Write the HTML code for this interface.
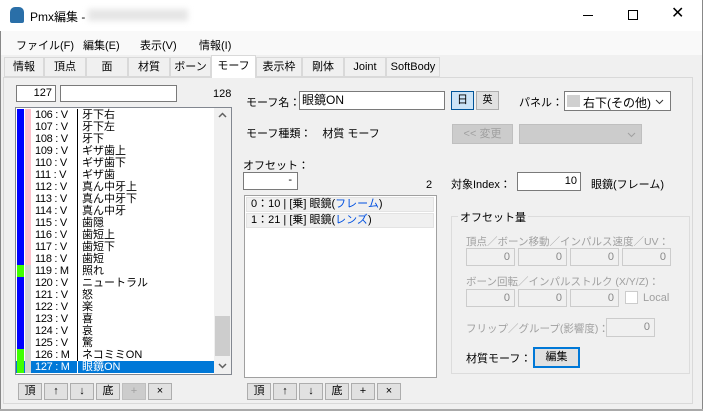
<!DOCTYPE html>
<html><head><meta charset="utf-8"><style>
*{box-sizing:border-box;margin:0;padding:0}
body{width:703px;height:411px;overflow:hidden;background:#f0f0f0;font-family:"Liberation Sans","Noto Sans CJK JP",sans-serif;font-size:11px;color:#000;position:relative}
.a{position:absolute;white-space:nowrap}
.tb{background:#fff;border:1px solid #7a7a7a}
.btn{position:absolute;background:#e1e1e1;border:1px solid #adadad;text-align:center;line-height:15px;font-size:11px}
.dis{color:#a0a0a0}
.dbox{position:absolute;background:#f0f0f0;border:1px solid #ccc;text-align:right;padding-right:4px;color:#888;line-height:16px}
.row{position:absolute;left:16px;width:198px;height:12px;line-height:12px;font-size:11px}
.sw1{position:absolute;left:1px;top:0;width:7px;height:12px}
.sw2{position:absolute;left:9px;top:0;width:6px;height:12px}
.num{position:absolute;left:19px;top:0;letter-spacing:-0.3px}
.sep{position:absolute;left:61px;top:0;width:1px;height:12px;background:#000}
.nm{position:absolute;left:66px;top:0}
.tab{position:absolute;top:57px;height:20px;border:1px solid #d9d9d9;line-height:18px;text-align:center}
</style></head><body>
<div class="a" style="left:0;top:0;width:703px;height:31px;background:#fff"></div>
<div class="a" style="left:10px;top:7px;width:14px;height:16px;background:#2a6fa8;border-radius:5px 5px 2px 2px"></div>
<div class="a" style="left:30px;top:8px;font-size:12px">Pmx編集 -</div>
<div class="a" style="left:88px;top:9px;width:100px;height:12px;background:#e6e6e6;filter:blur(3px)"></div>
<div class="a" style="left:583px;top:15px;width:10px;height:1px;background:#000"></div>
<div class="a" style="left:628px;top:10px;width:10px;height:10px;border:1px solid #000"></div>
<div class="a" style="left:671px;top:4px;font-size:16px;line-height:20px">✕</div>
<div class="a" style="left:1px;top:31px;width:701px;height:24px;background:#f9f9f9"></div>
<div class="a" style="left:16px;top:37px">ファイル(F)</div>
<div class="a" style="left:83px;top:37px">編集(E)</div>
<div class="a" style="left:140px;top:37px">表示(V)</div>
<div class="a" style="left:199px;top:37px">情報(I)</div>
<div class="a" style="left:0;top:55px;width:703px;height:22px;background:#f0f0f0"></div>
<div class="tab" style="left:4px;width:40px">情報</div>
<div class="tab" style="left:44px;width:42px">頂点</div>
<div class="tab" style="left:86px;width:42px">面</div>
<div class="tab" style="left:128px;width:42px">材質</div>
<div class="tab" style="left:170px;width:41px">ボーン</div>
<div class="tab" style="left:256px;width:46px">表示枠</div>
<div class="tab" style="left:302px;width:42px">剛体</div>
<div class="tab" style="left:344px;width:42px">Joint</div>
<div class="tab" style="left:386px;width:54px">SoftBody</div>
<div class="a" style="left:211px;top:55px;width:45px;height:23px;border:1px solid #d9d9d9;border-bottom:none;background:#fff;text-align:center;line-height:20px;z-index:2">モーフ</div>
<div class="a" style="left:3px;top:77px;width:690px;height:327px;border:1px solid #d9d9d9;background:#f0f0f0"></div>
<div class="a" style="left:0;top:31px;width:1px;height:380px;background:#888"></div>
<div class="a" style="left:702px;top:0;width:1px;height:411px;background:#888"></div>
<div class="a" style="left:0;top:409px;width:703px;height:2px;background:#aaa"></div>
<div class="a tb" style="left:16px;top:85px;width:40px;height:17px;text-align:right;padding-right:3px;line-height:15px">127</div>
<div class="a tb" style="left:60px;top:85px;width:117px;height:17px"></div>
<div class="a" style="left:213px;top:88px">128</div>
<div class="a" style="left:15px;top:107px;width:217px;height:268px;background:#fff;border:1px solid #828790"></div>
<div id="rows"></div>
<div class="a" style="left:214px;top:108px;width:17px;height:266px;background:#f0f0f0"></div>
<svg class="a" style="left:218px;top:112px" width="9" height="6"><path d="M1 5L4.5 1.5L8 5" fill="none" stroke="#606060" stroke-width="1.5"/></svg>
<div class="a" style="left:215px;top:316px;width:15px;height:40px;background:#cdcdcd"></div>
<svg class="a" style="left:218px;top:363px" width="9" height="6"><path d="M1 1L4.5 4.5L8 1" fill="none" stroke="#606060" stroke-width="1.5"/></svg>
<div class="btn" style="left:18px;top:383px;width:24px;height:17px">頂</div>
<div class="btn" style="left:44px;top:383px;width:24px;height:17px">↑</div>
<div class="btn" style="left:70px;top:383px;width:24px;height:17px">↓</div>
<div class="btn" style="left:96px;top:383px;width:24px;height:17px">底</div>
<div class="btn" style="left:122px;top:383px;width:24px;height:17px;background:#ccc;border-color:#bfbfbf;color:#a0a0a0">+</div>
<div class="btn" style="left:148px;top:383px;width:24px;height:17px">×</div>
<div class="btn" style="left:247px;top:383px;width:24px;height:17px">頂</div>
<div class="btn" style="left:273px;top:383px;width:24px;height:17px">↑</div>
<div class="btn" style="left:299px;top:383px;width:24px;height:17px">↓</div>
<div class="btn" style="left:325px;top:383px;width:24px;height:17px">底</div>
<div class="btn" style="left:351px;top:383px;width:24px;height:17px">+</div>
<div class="btn" style="left:377px;top:383px;width:24px;height:17px">×</div>
<div class="a" style="left:246px;top:94px">モーフ名：</div>
<div class="a tb" style="left:299px;top:91px;width:146px;height:19px;padding-left:2px;line-height:17px;font-size:12px">眼鏡ON</div>
<div class="btn" style="left:451px;top:91px;width:23px;height:19px;background:#cce4f7;border-color:#005499;line-height:17px">日</div>
<div class="btn" style="left:476px;top:91px;width:23px;height:19px;line-height:17px;font-size:10px">英</div>
<div class="a" style="left:519px;top:94px">パネル：</div>
<div class="a tb" style="left:564px;top:91px;width:107px;height:20px"></div>
<div class="a" style="left:567px;top:95px;width:13px;height:12px;background:#d0d0d0"></div>
<div class="a" style="left:583px;top:94px;font-size:12px">右下(その他)</div>
<svg class="a" style="left:655px;top:99px" width="9" height="6"><path d="M1 1L4.5 4.5L8 1" fill="none" stroke="#333" stroke-width="1"/></svg>
<div class="a" style="left:246px;top:125px">モーフ種類：　材質 モーフ</div>
<div class="btn" style="left:452px;top:124px;width:61px;height:20px;background:#ccc;border-color:#bfbfbf;color:#a0a0a0;line-height:18px">&lt;&lt; 変更</div>
<div class="a" style="left:519px;top:124px;width:123px;height:20px;background:#ccc;border:1px solid #bfbfbf"></div>
<svg class="a" style="left:627px;top:132px" width="9" height="6"><path d="M1 1L4.5 4.5L8 1" fill="none" stroke="#a0a0a0" stroke-width="1"/></svg>
<div class="a" style="left:243px;top:157px">オフセット：</div>
<div class="a tb" style="left:243px;top:172px;width:55px;height:18px;text-align:right;padding-right:5px;line-height:15px">-</div>
<div class="a" style="left:426px;top:179px">2</div>
<div class="a" style="left:244px;top:195px;width:193px;height:183px;background:#fff;border:1px solid #a0a0a0"></div>
<div class="a" style="left:246px;top:197px;width:188px;height:15px;background:#f0f0f0;border:1px solid #e3e3e3;padding-left:4px;line-height:13px">0：10 | [乗] 眼鏡(<span style="color:#0050e0">フレーム</span>)</div>
<div class="a" style="left:246px;top:213px;width:188px;height:15px;background:#f0f0f0;border:1px solid #e3e3e3;padding-left:4px;line-height:13px">1：21 | [乗] 眼鏡(<span style="color:#0050e0">レンズ</span>)</div>
<div class="a" style="left:451px;top:176px">対象Index：</div>
<div class="a tb" style="left:517px;top:172px;width:64px;height:19px;text-align:right;padding-right:3px;line-height:17px">10</div>
<div class="a" style="left:591px;top:176px">眼鏡(フレーム)</div>
<div class="a" style="left:451px;top:216px;width:239px;height:158px;border:1px solid #dcdcdc"></div>
<div class="a" style="left:458px;top:209px;background:#f0f0f0;padding:0 2px">オフセット量</div>
<div class="a dis" style="left:466px;top:234px;font-size:10.5px">頂点／ボーン移動／インパルス速度／UV：</div>
<div class="dbox" style="left:466px;top:248px;width:49px;height:18px">0</div>
<div class="dbox" style="left:518px;top:248px;width:49px;height:18px">0</div>
<div class="dbox" style="left:570px;top:248px;width:49px;height:18px">0</div>
<div class="dbox" style="left:622px;top:248px;width:49px;height:18px">0</div>
<div class="a dis" style="left:466px;top:274px;font-size:10.5px">ボーン回転／インパルストルク (X/Y/Z)：</div>
<div class="dbox" style="left:466px;top:289px;width:49px;height:18px">0</div>
<div class="dbox" style="left:518px;top:289px;width:49px;height:18px">0</div>
<div class="dbox" style="left:570px;top:289px;width:49px;height:18px">0</div>
<div class="a" style="left:625px;top:291px;width:13px;height:13px;border:1px solid #ccc;background:#fff"></div>
<div class="a dis" style="left:643px;top:292px">Local</div>
<div class="a dis" style="left:466px;top:321px;font-size:10.5px">フリップ／グループ(影響度)：</div>
<div class="dbox" style="left:606px;top:318px;width:49px;height:19px">0</div>
<div class="a" style="left:466px;top:350px">材質モーフ：</div>
<div class="btn" style="left:533px;top:347px;width:47px;height:21px;border:2px solid #0078d7;line-height:17px">編集</div>
<script>
var rows=[["106","V","牙下右"],["107","V","牙下左"],["108","V","牙下"],["109","V","ギザ歯上"],["110","V","ギザ歯下"],["111","V","ギザ歯"],["112","V","真ん中牙上"],["113","V","真ん中牙下"],["114","V","真ん中牙"],["115","V","歯隠"],["116","V","歯短上"],["117","V","歯短下"],["118","V","歯短"],["119","M","照れ"],["120","V","ニュートラル"],["121","V","怒"],["122","V","楽"],["123","V","喜"],["124","V","哀"],["125","V","驚"],["126","M","ネコミミON"],["127","M","眼鏡ON"]];
var h="";
rows.forEach(function(r,i){
var sel=i==21;var c1=r[1]=="M"?"#40ff00":"#0000ff";var c2=i<13?"#ffc0cb":"#d3d3d3";
h+='<div class="row" style="top:'+(109+i*12)+'px;'+(sel?'background:#0078d7;color:#fff;':'')+'"><div class="sw1" style="background:'+c1+'"></div><div class="sw2" style="background:'+c2+'"></div><div class="num">'+r[0]+' : '+r[1]+'</div><div class="sep" style="'+(sel?'background:#fff':'')+'"></div><div class="nm">'+r[2]+'</div></div>';});
document.getElementById("rows").outerHTML=h;
</script>
</body></html>
